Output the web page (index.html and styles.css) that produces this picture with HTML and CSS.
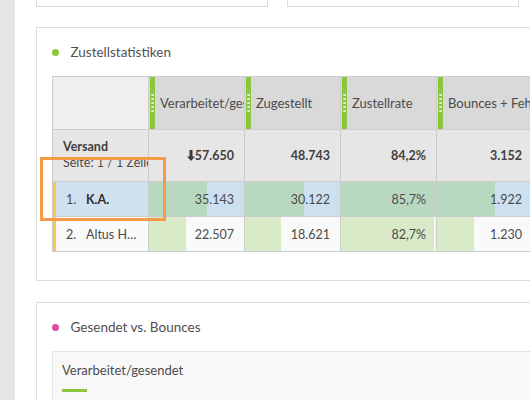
FILE: index.html
```html
<!DOCTYPE html>
<html lang="de">
<head>
<meta charset="utf-8">
<link rel="stylesheet" href="styles.css">
</head>
<body>
<div class="app">
  <aside class="rail"></aside>
  <main class="main">
    <div class="top-row">
      <div class="card stub"></div>
      <div class="card stub"></div>
    </div>

    <section class="card panel stats">
      <h2 class="title"><span class="dot dot-green"></span>Zustellstatistiken</h2>
      <div class="table">
        <div class="row head">
          <div class="cell first"></div>
          <div class="cell hcell"><span class="grip"></span><span class="label">Verarbeitet/gesendet</span></div>
          <div class="cell hcell"><span class="grip"></span><span class="label">Zugestellt</span></div>
          <div class="cell hcell"><span class="grip"></span><span class="label">Zustellrate</span></div>
          <div class="cell hcell"><span class="grip"></span><span class="label">Bounces + Fehler</span></div>
          <div class="cell hcell"><span class="grip"></span><span class="label">Abmeldungen</span></div>
        </div>
        <div class="row total">
          <div class="cell first">
            <div class="dim">Versand</div>
            <div class="sub">Seite: 1 / 1 Zeilen</div>
          </div>
          <div class="cell num"><svg class="arrow" width="8" height="11" viewBox="0 0 8 11"><path d="M2.5 0h3v6.5H8L4 11 0 6.5h2.5z" fill="#3a3a3a"/></svg>57.650</div>
          <div class="cell num">48.743</div>
          <div class="cell num">84,2%</div>
          <div class="cell num">3.152</div>
          <div class="cell num">120</div>
        </div>
        <div class="row data sel">
          <div class="cell first item"><span class="idx">1.</span><span class="name strong">K.A.</span></div>
          <div class="cell num bar" style="--p:61%">35.143</div>
          <div class="cell num bar" style="--p:62%">30.122</div>
          <div class="cell num bar" style="--p:100%">85,7%</div>
          <div class="cell num bar" style="--p:61%">1.922</div>
          <div class="cell num bar" style="--p:60%">70</div>
        </div>
        <div class="row data">
          <div class="cell first item"><span class="idx">2.</span><span class="name">Altus H…</span></div>
          <div class="cell num bar" style="--p:39%">22.507</div>
          <div class="cell num bar" style="--p:38%">18.621</div>
          <div class="cell num bar" style="--p:98%">82,7%</div>
          <div class="cell num bar" style="--p:39%">1.230</div>
          <div class="cell num bar" style="--p:40%">50</div>
        </div>
      </div>
    </section>

    <section class="card panel chart">
      <h2 class="title"><span class="dot dot-pink"></span>Gesendet vs. Bounces</h2>
      <div class="inner">
        <div class="legend">Verarbeitet/gesendet</div>
        <div class="legend-line"></div>
      </div>
    </section>
  </main>
  <div class="focus"></div>
</div>
</body>
</html>
```

FILE: styles.css
```css
html, body {
  margin: 0;
  padding: 0;
  background: #fff;
  overflow: hidden;
}
body {
  font-family: Lato, "Open Sans", sans-serif;
  color: #4b4b4b;
}
.app {
  position: relative;
  display: flex;
  width: 700px;
  height: 400px;
  overflow: hidden;
}
.rail {
  flex: none;
  width: 15px;
  background: #e6e6e6;
}
.main {
  flex: none;
  width: 640px;
  padding-left: 21px;
  display: flex;
  flex-direction: column;
  gap: 20px;
}
.main > * {
  flex: none;
}
.top-row {
  display: flex;
  gap: 19px;
  height: 7px;
}
.card {
  box-sizing: border-box;
  border: 1px solid #dddddd;
  background: #fff;
}
.stub {
  width: 232px;
  border-top: none;
}
.panel {
  padding: 14px 15px 0 15px;
}
.stats {
  height: 254px;
}
.chart {
  margin-top: 1px;
  height: 120px;
}
.title {
  margin: 0 0 14px 0;
  height: 20px;
  display: flex;
  align-items: center;
  gap: 12px;
  font-size: 13.5px;
  font-weight: 400;
  color: #505050;
}
.dot {
  width: 7px;
  height: 7px;
  margin-left: -0.5px;
  border-radius: 50%;
  flex: none;
}
.dot-green { background: #8cc63f; }
.dot-pink { background: #dc4ea3; }

.table {
  width: 577px;
  border-top: 1px solid #cccccc;
  border-left: 1px solid #cccccc;
}
.row {
  display: flex;
  border-bottom: 1px solid #cccccc;
}
.cell {
  box-sizing: border-box;
  width: 96px;
  flex: none;
  border-right: 1px solid #cccccc;
  font-size: 12px;
}
.head { height: 52px; }
.head .first { width: 96px; background: #efefef; }
.hcell {
  background: #d9d9d9;
  display: flex;
  align-items: center;
  overflow: hidden;
  white-space: nowrap;
}
.grip {
  flex: none;
  align-self: stretch;
  width: 5px;
  margin-left: 1px;
  background-color: #8cc63f;
  background-image:
    radial-gradient(circle at 2.5px 2px, #e9f4dc 1px, transparent 1.3px),
    radial-gradient(circle at 2.5px 2px, #e9f4dc 1px, transparent 1.3px),
    radial-gradient(circle at 2.5px 2px, #e9f4dc 1px, transparent 1.3px),
    radial-gradient(circle at 2.5px 2px, #e9f4dc 1px, transparent 1.3px),
    radial-gradient(circle at 2.5px 2px, #e9f4dc 1px, transparent 1.3px);
  background-size: 5px 4px;
  background-position: 0 16px, 0 20px, 0 24px, 0 28px, 0 32px;
  background-repeat: no-repeat;
}
.label {
  padding-left: 5px;
  font-size: 13px;
  color: #4b4b4b;
}

.total {
  height: 51px;
  background: #e6e6e6;
}
.total .first {
  padding: 9px 0 0 10px;
  overflow: hidden;
  white-space: nowrap;
}
.dim {
  font-weight: 700;
  font-size: 12.5px;
  line-height: 16px;
  color: #3f3f3f;
}
.sub {
  font-size: 12.5px;
  line-height: 16px;
  color: #4b4b4b;
}
.num {
  display: flex;
  align-items: center;
  justify-content: flex-end;
  padding-right: 10px;
}
.total .num {
  font-weight: 700;
  font-size: 12.5px;
  color: #3f3f3f;
}

.data { height: 34px; }
.data .num { font-size: 12.5px; }
.data .first {
  border-left: 3px solid #f7c948;
  background: #fafafa;
}
.sel .first { background: #cfe0ef; }
.item {
  display: flex;
  align-items: center;
  padding-left: 10px;
  white-space: nowrap;
  overflow: hidden;
  font-size: 12.5px;
}
.idx {
  width: 20px;
  flex: none;
}
.name { color: #4b4b4b; }
.strong { font-weight: 700; color: #2f2f2f; }
.bar {
  background: linear-gradient(to right, #d9eac8 0, #d9eac8 var(--p), #f9f9f9 var(--p));
  color: #4b4b4b;
}
.sel .bar {
  background: linear-gradient(to right, #b9d8c0 0, #b9d8c0 var(--p), #cde0ef var(--p));
}

.inner {
  box-sizing: border-box;
  height: 60px;
  width: 577px;
  border: 1px solid #e3e3e3;
  background: #f8f8f8;
  padding: 9px 0 0 9px;
}
.legend {
  font-size: 13px;
  line-height: 18px;
  color: #4b4b4b;
}
.legend-line {
  margin-top: 10px;
  width: 25px;
  height: 3px;
  background: #8cc63f;
}

.focus {
  position: absolute;
  left: 40px;
  top: 157px;
  width: 126px;
  height: 64px;
  box-sizing: border-box;
  border: 3px solid #f59b48;
}
```
